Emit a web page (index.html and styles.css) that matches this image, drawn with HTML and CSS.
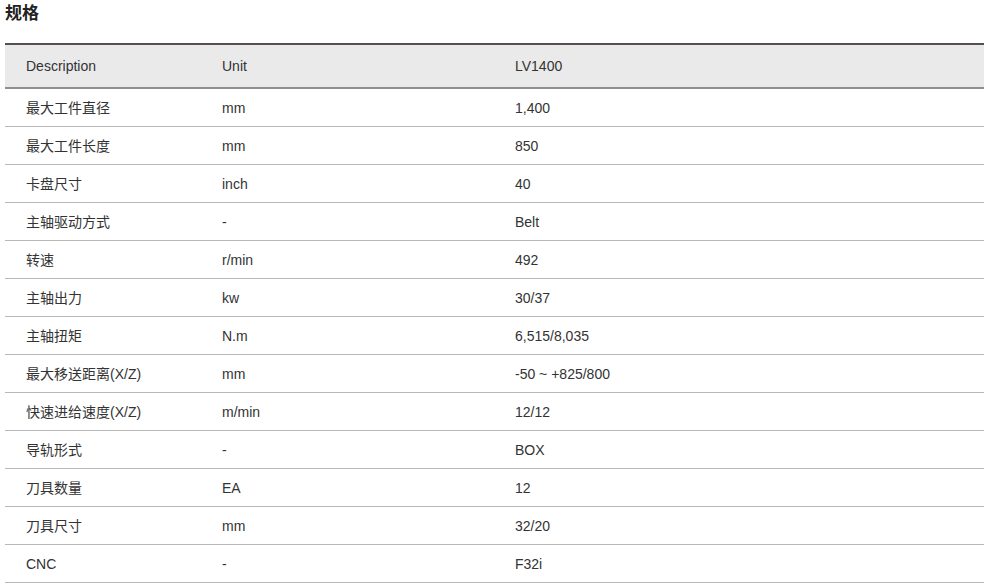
FILE: index.html
```html
<!DOCTYPE html>
<html lang="zh">
<head>
<meta charset="utf-8">
<title>规格</title>
<link rel="stylesheet" href="styles.css">
</head>
<body>
<h2 class="title">规格</h2>
<table class="spec">
  <thead>
    <tr><th class="c1">Description</th><th class="c2">Unit</th><th class="c3">LV1400</th></tr>
  </thead>
  <tbody>
    <tr><td>最大工件直径</td><td>mm</td><td>1,400</td></tr>
    <tr><td>最大工件长度</td><td>mm</td><td>850</td></tr>
    <tr><td>卡盘尺寸</td><td>inch</td><td>40</td></tr>
    <tr><td>主轴驱动方式</td><td>-</td><td>Belt</td></tr>
    <tr><td>转速</td><td>r/min</td><td>492</td></tr>
    <tr><td>主轴出力</td><td>kw</td><td>30/37</td></tr>
    <tr><td>主轴扭矩</td><td>N.m</td><td>6,515/8,035</td></tr>
    <tr><td>最大移送距离(X/Z)</td><td>mm</td><td>-50 ~ +825/800</td></tr>
    <tr><td>快速进给速度(X/Z)</td><td>m/min</td><td>12/12</td></tr>
    <tr><td>导轨形式</td><td>-</td><td>BOX</td></tr>
    <tr><td>刀具数量</td><td>EA</td><td>12</td></tr>
    <tr><td>刀具尺寸</td><td>mm</td><td>32/20</td></tr>
    <tr><td>CNC</td><td>-</td><td>F32i</td></tr>
  </tbody>
</table>
</body>
</html>
```
FILE: styles.css
```css
html, body {
  margin: 0;
  padding: 0;
  background: #fff;
}
body {
  padding: 0 5px;
  font-family: "Liberation Sans", Arial, "Noto Sans CJK SC", sans-serif;
  font-size: 14px;
  color: #333;
}
.title {
  margin: 0;
  padding-top: 1px;
  height: 42px;
  font-family: "Noto Sans CJK SC", sans-serif;
  font-size: 17px;
  font-weight: 700;
  line-height: 22px;
  color: #222;
}
.spec {
  width: 979px;
  border-collapse: collapse;
  table-layout: fixed;
  border-top: 2px solid #55504e;
}
.spec th, .spec td {
  text-align: left;
  font-weight: normal;
  padding: 0 0 0 21px;
  vertical-align: middle;
  line-height: 16px;
}
.spec th {
  background: #eaeaea;
  height: 42px;
  border-bottom: 2px solid #8f8f8f;
}
.spec td {
  height: 37px;
  border-bottom: 1px solid #b8b8b8;
}
.c1 { width: 175px; }
.c2 { width: 272px; }
```
